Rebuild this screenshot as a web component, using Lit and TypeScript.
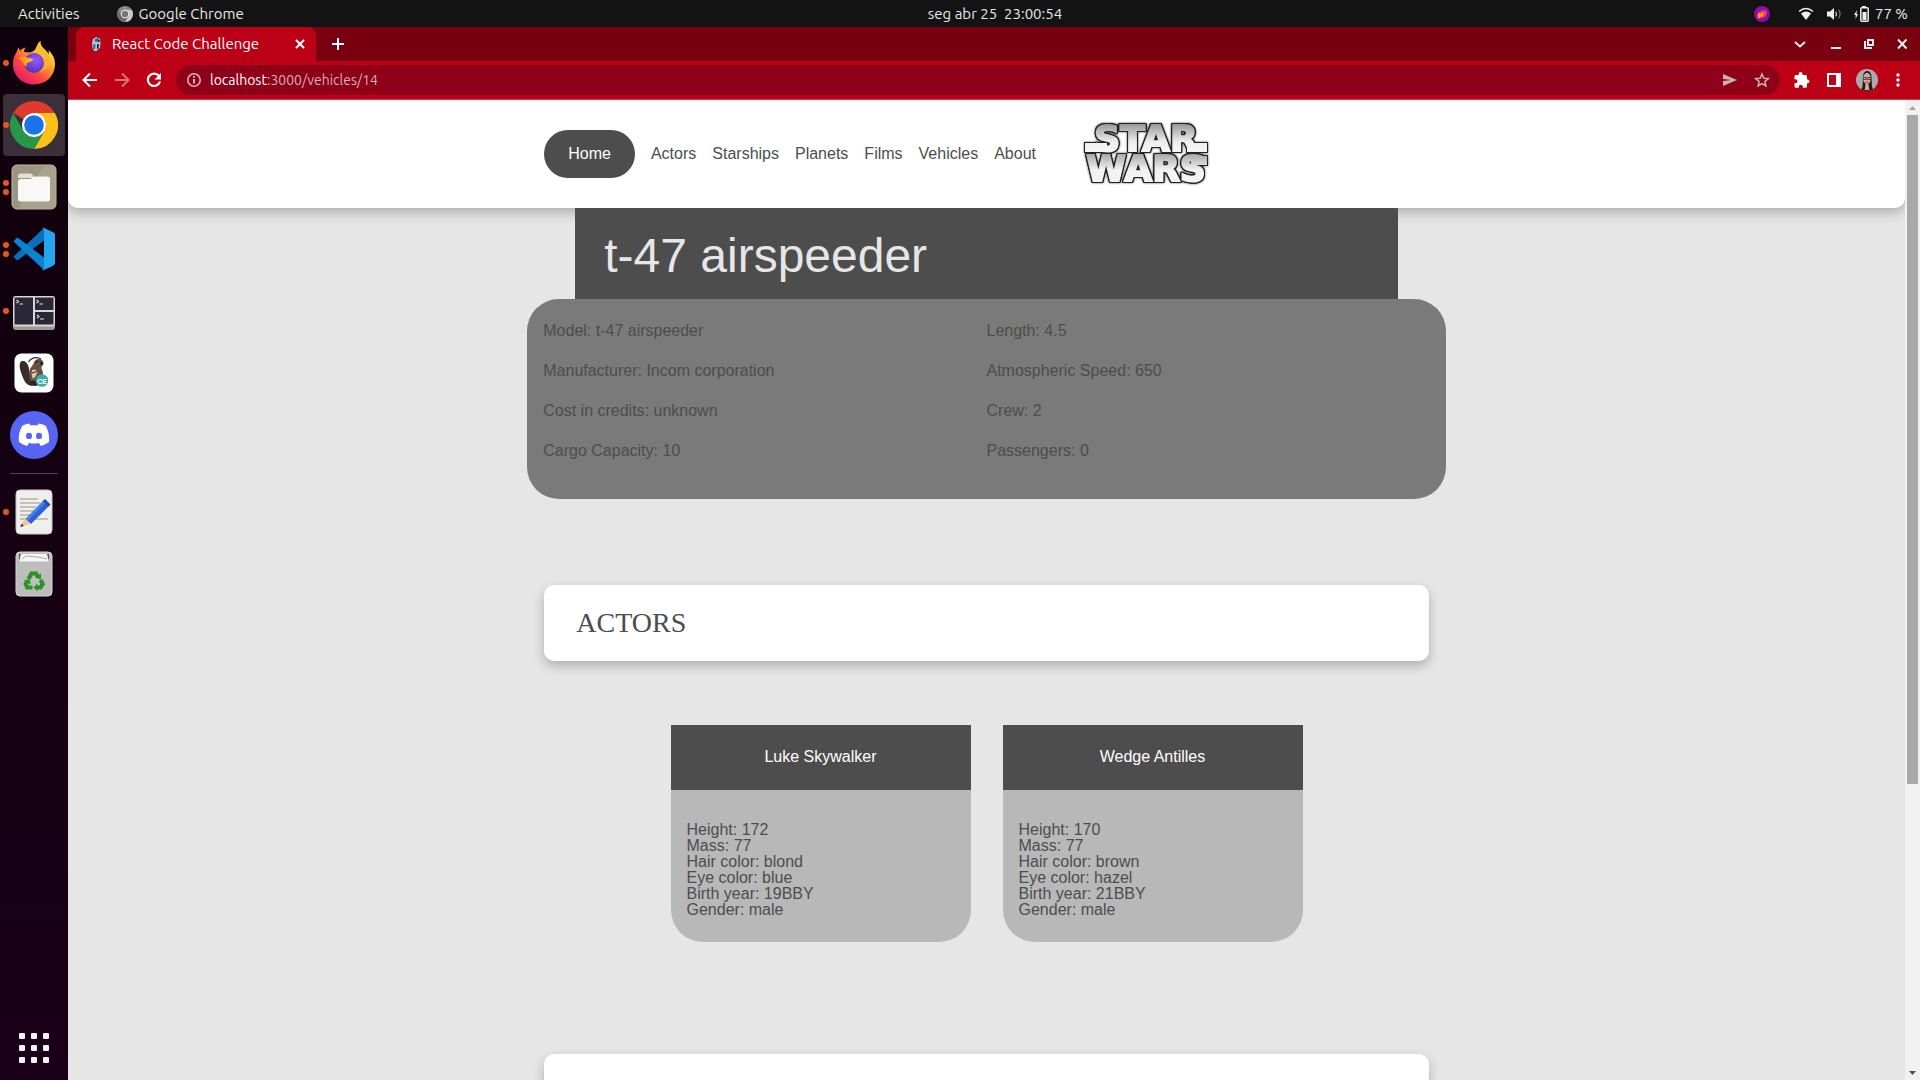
import { LitElement, html, css, svg } from "lit";
import { customElement, property } from "lit/decorators.js";

type Fact = [label: string, value: string];

interface Person {
  name: string;
  facts: Fact[];
}

const NAV = ["Actors", "Starships", "Planets", "Films", "Vehicles", "About"];

const VEHICLE: Fact[] = [
  ["Model", "t-47 airspeeder"],
  ["Length", "4.5"],
  ["Manufacturer", "Incom corporation"],
  ["Atmospheric Speed", "650"],
  ["Cost in credits", "unknown"],
  ["Crew", "2"],
  ["Cargo Capacity", "10"],
  ["Passengers", "0"],
];

const ACTORS: Person[] = [
  {
    name: "Luke Skywalker",
    facts: [
      ["Height", "172"],
      ["Mass", "77"],
      ["Hair color", "blond"],
      ["Eye color", "blue"],
      ["Birth year", "19BBY"],
      ["Gender", "male"],
    ],
  },
  {
    name: "Wedge Antilles",
    facts: [
      ["Height", "170"],
      ["Mass", "77"],
      ["Hair color", "brown"],
      ["Eye color", "hazel"],
      ["Birth year", "21BBY"],
      ["Gender", "male"],
    ],
  },
];

/* ---------- icons ---------- */

const firefoxIcon = html`<svg viewBox="0 0 48 48" width="48" height="48" aria-hidden="true">
  <defs>
    <linearGradient id="ff-a" x1="0.85" y1="0.1" x2="0.2" y2="0.95">
      <stop offset="0" stop-color="#fff44f" /><stop offset="0.35" stop-color="#ffa22e" />
      <stop offset="0.65" stop-color="#ff4a3f" /><stop offset="1" stop-color="#e5156f" />
    </linearGradient>
    <radialGradient id="ff-b" cx="0.6" cy="0.35" r="0.7">
      <stop offset="0" stop-color="#9059ff" /><stop offset="0.6" stop-color="#7140d8" /><stop offset="1" stop-color="#4a36a8" />
    </radialGradient>
    <linearGradient id="ff-c" x1="0" y1="0" x2="1" y2="0">
      <stop offset="0" stop-color="#ff8a1e" /><stop offset="1" stop-color="#ffc02e" />
    </linearGradient>
  </defs>
  <path fill="url(#ff-a)" d="M30.500 2c-.5 3 1 5.500 3.500 8 2 2 3.500 3.500 4.500 5.500.5-1.500.4-3-.2-4.500C43 15.500 45.300 20 45 26c-.5 11-9 19.500-21 19.500S3 36.500 3 25c0-5.500 2-10 4-12.500.2-1.500.8-3 2-4 .1 1.500.5 2.500 1.300 3.300C11.500 10 13.500 9 15.500 8.500c-1 1.500-1.500 3-1.300 4.500l5.800.5C23 12.500 25 11 26 9c1-2.500 2-5 4.500-7z" />
  <circle cx="24" cy="24" r="10" fill="url(#ff-b)" />
  <path fill="url(#ff-c)" d="M8.500 19c2-1.600 5-1.700 7.500-.7 2.500 1 5 .7 7.500 1.700-.5 2-3 3-5.500 3.700-1.500.5-2 2.300-1 4.300-3-1.500-4-4-5-6z" />
  <path fill="#ffb52e" opacity=".75" d="M26 9c4 1 8.500 5 9 11 .5 6-2 11-6.500 13 7-.5 12-6 11.500-14-.5-4-3-7-6-9.500-3-2-4-4-3.500-7.500-2.500 2-3.500 4.500-4.500 7z" />
</svg>`;

const chromeIcon = html`<svg viewBox="0 0 48 48" width="48" height="48" aria-hidden="true">
  <path fill="#df3a2e" d="M24 0A24 24 0 0 1 44.800 12H24a12 12 0 0 0-10.400 6L3.200 12A24 24 0 0 1 24 0z" />
  <path fill="#fbc116" d="M44.800 12A24 24 0 0 1 24 48l10.400-18A12 12 0 0 0 34.400 18L24 12z" />
  <path fill="#279847" d="M3.200 12A24 24 0 0 0 24 48l10.400-18a12 12 0 0 1-20.800 0z" />
  <circle cx="24" cy="24" r="12" fill="#fff" /><circle cx="24" cy="24" r="9.800" fill="#1a73e8" />
</svg>`;

const filesIcon = html`<svg viewBox="0 0 48 48" width="48" height="48" aria-hidden="true">
  <rect x="2" y="2" width="44" height="44" rx="5" fill="#9c9580" stroke="#c0baa6" />
  <path d="M34 2.500h8a4 4 0 0 1 4 4V42a4 4 0 0 1-4 4H8z" fill="#aea791" opacity=".7" />
  <path d="M8 13a2.500 2.500 0 0 1 2.500-2.500H19c2 0 3 .6 4 2l1.500 2.500H8z" fill="#e4dfd3" />
  <path d="M8 19c0-2 1-3 3-3h9c2 0 2.500-2.500 5-2.500h12.500A2.500 2.500 0 0 1 40 16v20a2.500 2.500 0 0 1-2.500 2.500h-27A2.500 2.500 0 0 1 8 36z" fill="#f9f8f6" />
</svg>`;

const codeIcon = html`<svg viewBox="0 0 48 48" width="48" height="48" aria-hidden="true">
  <path fill="#0a6fb8" d="M3.500 31.500 6 34.500c.8.800 1.800.8 2.600.2L34 15.500V3z" />
  <path fill="#0a84d0" d="M3.500 16.500 6 13.500c.8-.8 1.800-.8 2.600-.2L34 32.500V45z" />
  <path fill="#25a4f0" d="M34 3l9.500 4.600c1 .5 1.500 1.300 1.500 2.300v28.200c0 1-.5 1.800-1.500 2.300L34 45c-1 .4-1.800 0-2-.5 1 .3 2-.3 2-1.500V5c0-1.200-1-1.800-2-1.500.3-.6 1-.9 2-.5z" />
</svg>`;

const terminalIcon = html`<svg viewBox="0 0 48 48" width="48" height="48" aria-hidden="true">
  <rect x="3" y="9" width="42" height="34" rx="3" fill="#9d9b98" />
  <rect x="3" y="9" width="42" height="30.500" rx="3" fill="#d9d7d2" />
  <rect x="4.500" y="10.500" width="18.500" height="27" fill="#2a2838" />
  <rect x="25" y="10.500" width="18.500" height="12.500" fill="#2a2838" />
  <rect x="25" y="25" width="18.500" height="12.500" fill="#2a2838" />
  <g fill="none" stroke="#e8e8e8" stroke-width="1.100">
    <path d="M6.500 13l2 1.500-2 1.500M9.500 17H13" /><path d="M26.500 13l2 1.500-2 1.500M29.500 17H33" /><path d="M27 28l2 1.500-2 1.500M30 32h4" />
  </g>
</svg>`;

const beaverIcon = html`<svg viewBox="0 0 48 48" width="48" height="48" aria-hidden="true">
  <rect x="4.500" y="4.500" width="39" height="39" rx="7" fill="#fff" />
  <path fill="#382d29" d="M11 12.500c3-1.500 6 .5 7.500 5 1.200 4 .8 7 2 10.500 1 3.500 3 6 5 7.500-5 2.500-9.500.5-11.500-4.500-2.500-6-6.500-15-3-18.500z" />
  <path fill="#65503f" d="M20 20c1.500-2.500 3-4 4-6.500 1-2.600 3-4 5.500-3.500 3 .5 4.500 3 3.500 5.500-.5 1.500-2 2-1.500 4 2 3.500 2 8 0 12-1.500 3.500-4 5.500-8 5.500-4-5-5-11-3.500-17z" />
  <path fill="none" stroke="#2e2522" stroke-width="1.200" d="M18.500 13c2-4 8-6 12.500-3M25 13.500l3-1.500" />
  <path fill="#2e2522" d="M30 13l3.500.5-.5 2.500-3-.5zM20 33c2-2 4-1 6 0l2 3.500h-8z" />
  <path fill="#d8c4ab" d="M22 21c2.500-1.500 4.500 0 5.500 2-1 3-2 5-4.500 7-1.500-3-1.500-6-1-9z" />
  <path fill="none" stroke="#2e2522" d="M22 24l5-1.500" />
  <circle cx="32" cy="31.500" r="6.300" fill="#3fa9b0" />
  <text x="32" y="34.500" text-anchor="middle" font-family="Liberation Sans, sans-serif" font-weight="700" font-size="7" fill="#fff">CE</text>
</svg>`;

const discordIcon = html`<svg viewBox="0 0 48 48" width="48" height="48" aria-hidden="true">
  <circle cx="24" cy="24" r="24" fill="#5865f2" />
  <path fill="#fff" fill-rule="evenodd" d="M19.500 12.500c-2.600.4-5 1.200-7.200 2.200C9 19.800 8.300 25.500 9 31c2.700 2 5.400 3.300 8.200 4l1.800-3c3.300.8 6.700.8 10 0l1.800 3c2.800-.7 5.500-2 8.200-4 .8-6-.7-11.500-3.300-16.300-2.200-1-4.600-1.800-7.200-2.200l-1 2c-2.300-.3-4.700-.3-7 0zM19 21.700a3 3.200 0 1 1 0 6.400 3 3.200 0 0 1 0-6.400zm10 0a3 3.200 0 1 1 0 6.400 3 3.200 0 0 1 0-6.400z" />
</svg>`;

const editorIcon = html`<svg viewBox="0 0 48 48" width="48" height="48" aria-hidden="true">
  <rect x="6" y="2" width="36" height="44" rx="4" fill="#efefee" stroke="#c9c9c7" />
  <path stroke="#c6c1b6" stroke-width="2" d="M10 11h18M10 15h20M10 19h16M10 23h14M10 27h11M10 31h28" />
  <path fill="#2d62d6" d="M15.500 31 34 12l5.500 5.500L21 36z" /><path fill="#4b82ec" d="M15.500 31 34 12l2 2-18.500 19z" />
  <path fill="#1c4bb4" d="M33 13l2-2 5.500 5.500-2 2z" />
  <path fill="#f7c48b" d="M15 30.500 10 38.800 20.500 36z" /><path fill="#333" d="M12 35.500 10 39l3.700-1z" />
</svg>`;

const trashIcon = html`<svg viewBox="0 0 48 48" width="48" height="48" aria-hidden="true">
  <rect x="6" y="2" width="36" height="44" rx="4" fill="#bdbdbc" stroke="#d7d7d6" />
  <path fill="#555" d="M9 4h30v7H9z" /><path fill="#f5f5f5" d="M11 4h26l2 7.500H9z" /><path stroke="#aaa" fill="none" d="M12 9l4-3 12 1 9 2" />
  <g fill="none" stroke="#2a9328" stroke-width="4.200">
    <path d="M18.500 29l3-5.500h4.500l2 3.500" /><path d="M30.500 30l2.200 4-2.200 3.500H26" /><path d="M22.500 37.500h-5.200L15.700 34l2-3.500" />
  </g>
  <g fill="#2a9328"><path d="M31 23.500v6l-6-2z" /><path d="M27.500 33.500v8l-4-4z" /><path d="M14 30.500l5.500-1.500 1.200 5.500z" /></g>
</svg>`;

const appsIcon = html`<svg viewBox="0 0 30 30" width="30" height="30" fill="#f2f2f2" aria-hidden="true">
  ${[0, 12, 24].map((y) => [0, 12, 24].map((x) => svg`<rect x=${x} y=${y} width="6" height="6" rx="1" />`))}
</svg>`;

const faviconIcon = html`<svg viewBox="0 0 16 16" width="16" height="16" aria-hidden="true">
  <path fill="#a9c6d6" d="M5 3l3-2 4 1.500.5 5L12 12l-2 1-1 2H6l-1.500-3L4 7z" />
  <path fill="#35627f" d="M7 3l3-1 1.500 2-1 2L7 5.500zM5.500 8l2 .5-.5 4-2 1z" /><path fill="#16242d" d="M9 8.500l2-.5-.5 4-1.500 1zM10 4h1.500v2H10z" />
</svg>`;

const wordmark = html`<svg class="wordmark" viewBox="0 0 128 64" width="128" height="64" role="img" aria-label="Star Wars">
  <defs>
    <linearGradient id="steel" x1="0" y1="0" x2="0" y2="64" gradientUnits="userSpaceOnUse">
      <stop offset="0.04" stop-color="#9b9b9b" /><stop offset="0.3" stop-color="#ececec" />
      <stop offset="0.46" stop-color="#f6f6f6" /><stop offset="0.5" stop-color="#a8a8a8" /><stop offset="0.75" stop-color="#f3f3f3" />
    </linearGradient>
  </defs>
  <g class="steel" fill="url(#steel)" stroke="url(#steel)" stroke-width="2">
    <rect x="4" y="22" width="20" height="7" /><rect x="106" y="22" width="18" height="7" /><rect x="110" y="35" width="14" height="7" />
    <text text-anchor="middle"><tspan x="64" y="29">STAR</tspan><tspan x="64" y="59">WARS</tspan></text>
  </g>
</svg>`;

/* ---------- desktop bars ---------- */

@customElement("system-bar")
class SystemBar extends LitElement {
  static styles = css`
    :host {
      display: grid;
      grid-template-columns: 1fr auto 1fr;
      align-items: center;
      height: 27px;
      padding: 0 12px 0 18px;
      background: #131313;
      color: #e8e8e8;
      font: 15px/27px Ubuntu, "Noto Sans", sans-serif;
    }
    .group { display: flex; align-items: center; }
    .end { justify-content: flex-end; }
    .app { display: flex; align-items: center; gap: 6px; margin-left: 37px; }
    .clock { margin-left: 64px; white-space: pre; }
    .flame { margin-right: 28px; }
    .wifi { margin-right: 12px; }
    .volume { margin-right: 12px; }
    .battery { margin-right: 6px; }
    svg { display: block; }
  `;

  render() {
    return html`
      <div class="group">
        <span>Activities</span>
        <span class="app">
          <svg viewBox="0 0 16 16" width="16" height="16" aria-hidden="true">
            <circle cx="8" cy="8" r="8" fill="#8a8a8a" /><path fill="#c8c8c8" d="M14.900 4A8 8 0 0 1 8 16l3.500-6A4 4 0 0 0 11.500 6L8 4z" />
            <path fill="#6b6b6b" d="M1.100 4A8 8 0 0 0 8 16l3.500-6a4 4 0 0 1-7 0z" />
            <circle cx="8" cy="8" r="4.200" fill="#eee" /><circle cx="8" cy="8" r="3.200" fill="#777" />
          </svg>
          Google Chrome
        </span>
      </div>
      <time class="clock">seg abr 25  23:00:54</time>
      <div class="group end">
        <svg class="flame" viewBox="0 0 16 16" width="16" height="16" aria-hidden="true">
          <circle cx="8" cy="8" r="8" fill="#8a0fa8" />
          <path fill="#ff3d5e" d="M4 13C2.500 9 4 7 5 5l1 2 2-4 .5 3L11 3v3l2-2c0 4-1 8-6 8z" /><path fill="#ffb800" d="M4 12c0-3 .5-4 1-5l1.500 1.500L8.500 5l-.3 3.500L10 7c0 2-2 3.500-6 5z" />
        </svg>
        <svg class="wifi" viewBox="0 0 16 14" width="16" height="14" aria-hidden="true">
          <path fill="none" stroke="#eee" stroke-width="1.500" d="M1 4.500Q8-1.500 15 4.500" /><path fill="#eee" d="M3 6.500Q8 2.500 13 6.500L8 13z" />
        </svg>
        <svg class="volume" viewBox="0 0 16 14" width="16" height="14" aria-hidden="true">
          <path fill="#eee" d="M1 4.500h3L8 1v12L4 9.500H1z" /><path fill="none" stroke="#ccc" stroke-width="1.200" d="M9.500 4.500q2 2.500 0 5" />
          <path fill="none" stroke="#777" stroke-width="1.200" d="M12.500 2.500q3 4.500 0 9" />
        </svg>
        <svg class="battery" viewBox="0 0 15 16" width="15" height="16" aria-hidden="true">
          <path fill="#eee" d="M3 4L0 9h1.800L1.500 13 4 8H2.500z" /><path fill="#eee" d="M8 0h4v2H8z" />
          <rect x="6.800" y="1.800" width="7.400" height="13.400" rx="1" fill="none" stroke="#eee" stroke-width="1.500" /><path fill="#eee" d="M8.500 6h4v8h-4z" />
        </svg>
        <span>77 %</span>
      </div>
    `;
  }
}

@customElement("app-dock")
class AppDock extends LitElement {
  static styles = css`
    :host {
      display: flex;
      flex-direction: column;
      align-items: center;
      padding: 5px 0 17px;
      box-sizing: border-box;
      background: linear-gradient(#10020c, #1a0018);
    }
    .tile {
      display: grid;
      grid-template-columns: 1fr 48px 1fr;
      align-items: center;
      width: 68px;
      height: 62px;
      padding: 0;
      border: 0;
      background: none;
    }
    .tile svg { display: block; }
    .active { width: 62px; border-radius: 4px; background: #3b303a; }
    .active .dots { margin-left: 0; }
    .dots { display: flex; flex-direction: column; gap: 3px; margin-left: 3px; }
    .dot { width: 6px; height: 6px; border-radius: 50%; background: #e95420; }
    .rule { width: 48px; height: 1px; margin: 7px 0; background: #4f4450; }
    .apps { margin-top: auto; padding: 0; border: 0; background: none; }
    .apps svg { display: block; }
  `;

  private tile(name: string, icon: unknown, windows = 0, active = false) {
    return html`<button class="tile ${active ? "active" : ""}" aria-label=${name}>
      <span class="dots">${Array.from({ length: windows }, () => html`<span class="dot"></span>`)}</span>
      ${icon}
    </button>`;
  }

  render() {
    return html`
      ${this.tile("Firefox", firefoxIcon, 1)}
      ${this.tile("Google Chrome", chromeIcon, 1, true)}
      ${this.tile("Files", filesIcon, 2)}
      ${this.tile("Visual Studio Code", codeIcon, 2)}
      ${this.tile("Terminal", terminalIcon, 1)}
      ${this.tile("DBeaver", beaverIcon)}
      ${this.tile("Discord", discordIcon)}
      <div class="rule"></div>
      ${this.tile("Text Editor", editorIcon, 1)}
      ${this.tile("Trash", trashIcon)}
      <button class="apps" aria-label="Show applications">${appsIcon}</button>
    `;
  }
}

@customElement("browser-bar")
class BrowserBar extends LitElement {
  static styles = css`
    :host { display: block; font: 15px/20px Ubuntu, "Noto Sans", sans-serif; color: #fff; }
    button { display: grid; place-items: center; padding: 0; border: 0; background: none; color: inherit; font: inherit; }
    svg { display: block; }
    .tabs { display: flex; align-items: stretch; height: 34px; padding: 0 10px 0 8px; background: #79000e; }
    .tab {
      display: flex;
      align-items: center;
      box-sizing: border-box;
      width: 240px;
      padding: 0 9px 0 12px;
      border-radius: 8px 8px 0 0;
      background: #bc0016;
    }
    .title { flex: 1; margin-left: 8px; }
    .favicon { display: block; }
    .add { width: 44px; }
    .controls { display: flex; align-items: center; gap: 16px; margin-left: auto; }
    .tools {
      display: flex;
      align-items: center;
      box-sizing: border-box;
      height: 39px;
      padding: 0 12px;
      background: #bc0016;
      border-bottom: 1px solid #cf3a4b;
    }
    .tools > button { width: 20px; margin-right: 12px; }
    .tools > .dim { color: #dd7580; }
    .address {
      flex: 1;
      display: flex;
      align-items: center;
      height: 30px;
      margin-right: 12px;
      padding: 0 8px 0 10px;
      border-radius: 15px;
      background: #8f0019;
      color: #d3b0b5;
      font-size: 14px;
    }
    .url { flex: 1; margin-left: 8px; }
    .host { color: #fff; }
    .marks { display: flex; gap: 12px; color: #ccb0b4; }
    .tools > .last { margin-right: 0; }
    .face { border-radius: 50%; }
  `;

  render() {
    return html`
      <div class="tabs">
        <div class="tab">
          <span class="favicon">${faviconIcon}</span>
          <span class="title">React Code Challenge</span>
          <button aria-label="Close tab">
            <svg viewBox="0 0 14 14" width="14" height="14" stroke="currentColor" stroke-width="2"><path d="M3 3l8 8M11 3l-8 8" /></svg>
          </button>
        </div>
        <button class="add" aria-label="New tab">
          <svg viewBox="0 0 14 14" width="14" height="14" stroke="currentColor" stroke-width="2"><path d="M7 1v12M1 7h12" /></svg>
        </button>
        <div class="controls">
          <button aria-label="Search tabs">
            <svg viewBox="0 0 20 20" width="20" height="20" fill="none" stroke="#eee" stroke-width="2"><path d="M5 8l5 4.500L15 8" /></svg>
          </button>
          <button aria-label="Minimize">
            <svg viewBox="0 0 20 20" width="20" height="20" fill="#eee"><path d="M5 13h10v2H5z" /></svg>
          </button>
          <button aria-label="Restore">
            <svg viewBox="0 0 16 20" width="16" height="20" fill="none" stroke="#eee" stroke-width="2"><path d="M6 6h5v5H6zM3 7v7h7" /></svg>
          </button>
          <button aria-label="Close window">
            <svg viewBox="0 0 16 20" width="16" height="20" stroke="#eee" stroke-width="2"><path d="M4 5.500l8.500 9M12.500 5.500l-8.500 9" /></svg>
          </button>
        </div>
      </div>
      <div class="tools">
        <button aria-label="Back">
          <svg viewBox="0 0 20 20" width="20" height="20" fill="none" stroke="currentColor" stroke-width="2"><path d="M17 10H4M10 3.500L3.500 10l6.500 6.500" /></svg>
        </button>
        <button class="dim" aria-label="Forward">
          <svg viewBox="0 0 20 20" width="20" height="20" fill="none" stroke="currentColor" stroke-width="2"><path d="M3 10h13M10 3.500l6.500 6.500-6.500 6.500" /></svg>
        </button>
        <button aria-label="Reload">
          <svg viewBox="0 0 20 20" width="20" height="20" fill="none" stroke="currentColor" stroke-width="2.200"><path d="M15 6a6.200 6.200 0 1 0 1 5.500" /><path d="M17 3v6.500h-6.500z" fill="currentColor" stroke="none" /></svg>
        </button>
        <div class="address">
          <svg viewBox="0 0 16 16" width="16" height="16" fill="none" stroke="currentColor" stroke-width="1.600"><circle cx="8" cy="8" r="6.200" /><path stroke-width="2" d="M8 7v4.500M8 4v1.800" /></svg>
          <span class="url"><span class="host">localhost</span>:3000/vehicles/14</span>
          <span class="marks">
            <button aria-label="Share">
              <svg viewBox="0 0 20 20" width="20" height="20" fill="currentColor"><path d="M3 4l14 6-14 6v-5l8-1-8-1z" /></svg>
            </button>
            <button aria-label="Bookmark">
              <svg viewBox="0 0 20 20" width="20" height="20" fill="none" stroke="currentColor" stroke-width="1.500"><path d="M10 4l1.800 4.200 4.500.4-3.400 3 1 4.400L10 13.600 6.100 16l1-4.400-3.400-3 4.500-.4z" /></svg>
            </button>
          </span>
        </div>
        <button aria-label="Extensions">
          <svg viewBox="0 0 20 20" width="20" height="20" fill="currentColor"><path d="M16 9.500h-1V6.500A1.500 1.500 0 0 0 13.500 5h-3V4a1.900 1.900 0 0 0-3.800 0v1h-3A1.500 1.500 0 0 0 2.500 6.500v2.800h1a2 2 0 0 1 0 4h-1v2.900a1.500 1.500 0 0 0 1.500 1.500h2.800v-1a2 2 0 0 1 4 0v1h2.700a1.500 1.500 0 0 0 1.500-1.500v-3h1a1.900 1.900 0 0 0 0-3.700z" /></svg>
        </button>
        <button aria-label="Side panel">
          <svg viewBox="0 0 20 20" width="20" height="20" fill="currentColor" fill-rule="evenodd"><path d="M3 3h14v14H3zM5 5v10h7V5z" /></svg>
        </button>
        <button aria-label="Profile">
          <svg class="face" viewBox="0 0 22 22" width="22" height="22">
            <path fill="#a9aaac" d="M0 0h22v22H0z" /><path fill="#211c1f" d="M7 8c0-8 8.500-8 8.500 0l.5 10 2 4H4l2.500-4z" /><ellipse cx="11" cy="9.500" rx="3.800" ry="5.800" fill="#d6a796" />
            <path stroke="#33282b" stroke-width=".8" fill="none" d="M7.500 8.500h2.800v2H7.500zM11.700 8.500h2.800v2h-2.800z" /><path fill="#b33348" d="M9.500 12.800h3v1h-3z" /><path fill="#d9a595" d="M9.500 15h3l.8 6H8.700z" />
          </svg>
        </button>
        <button class="last" aria-label="Menu">
          <svg viewBox="0 0 20 20" width="20" height="20" fill="currentColor"><circle cx="10" cy="5" r="1.700" /><circle cx="10" cy="10" r="1.700" /><circle cx="10" cy="15" r="1.700" /></svg>
        </button>
      </div>
    `;
  }
}

/* ---------- web page ---------- */

@customElement("site-header")
class SiteHeader extends LitElement {
  static styles = css`
    :host {
      display: flex;
      justify-content: center;
      height: 108px;
      background: #fff;
      border-radius: 0 0 10px 10px;
      box-shadow: 0 5px 12px rgba(0, 0, 0, 0.24);
    }
    .inner { display: flex; align-items: center; box-sizing: border-box; width: 50%; padding: 0 17px; }
    nav { display: flex; align-items: center; gap: 16px; margin-right: 46px; }
    a { color: #4d4d4d; text-decoration: none; }
    .home { padding: 0 24px; border-radius: 24px; background: #4d4d4d; color: #fff; line-height: 48px; }
    .wordmark { display: block; overflow: visible; }
    .steel {
      font: 700 36px "DejaVu Sans", sans-serif;
      filter: drop-shadow(1px 0 #222) drop-shadow(-1px 0 #222) drop-shadow(0 1px #222) drop-shadow(0 -1px #222) drop-shadow(0 0 1px #555);
    }
  `;

  render() {
    return html`<div class="inner">
      <nav>
        <a class="home" href="#home">Home</a>
        ${NAV.map((name) => html`<a href="#${name.toLowerCase()}">${name}</a>`)}
      </nav>
      ${wordmark}
    </div>`;
  }
}

@customElement("person-card")
class PersonCard extends LitElement {
  @property({ attribute: false }) person!: Person;

  static styles = css`
    :host { display: block; width: 300px; border-radius: 0 0 32px 32px; overflow: hidden; background: #b8b8b8; }
    h3 { margin: 0; padding-bottom: 1px; background: #4d4d4d; color: #fff; font-weight: 400; font-size: 16px; line-height: 64px; text-align: center; }
    ul { margin: 0; padding: 32px 16px 24px; list-style: none; line-height: 16px; }
  `;

  render() {
    return html`
      <h3>${this.person.name}</h3>
      <ul>${this.person.facts.map(([label, value]) => html`<li>${label}: ${value}</li>`)}</ul>
    `;
  }
}

@customElement("app-root")
class AppRoot extends LitElement {
  static styles = css`
    :host {
      display: grid;
      grid-template: auto 1fr / 68px 1fr;
      height: 100vh;
      overflow: hidden;
      background: #e6e6e6;
    }
    system-bar { grid-column: 1 / -1; }
    .window { display: flex; flex-direction: column; min-height: 0; }
    .viewport { flex: 1; display: flex; min-height: 0; }
    .page { flex: 1; overflow: hidden; color: #4d4d4d; font: 16px/20px "Liberation Sans", Arial, sans-serif; }
    main { width: 50%; margin: 0 auto; }
    h1 {
      position: relative;
      margin: 0 48px;
      padding: 4px 29px 0;
      background: #4d4d4d;
      color: #e6e6e6;
      font-weight: 400;
      font-size: 48px;
      line-height: 87px;
    }
    .specs {
      display: grid;
      grid-template-columns: 1fr 1fr;
      grid-auto-rows: 40px;
      margin: 0;
      padding: 12px 16px 28px;
      list-style: none;
      line-height: 40px;
      border-radius: 32px;
      background: #7a7a7a;
    }
    h2 {
      margin: 86px 17px 64px;
      padding: 0 32px;
      border-radius: 10px;
      background: #fff;
      box-shadow: 0 5px 12px rgba(0, 0, 0, 0.24);
      font: 28px/76px "Liberation Serif", "Times New Roman", serif;
      text-transform: uppercase;
    }
    .cards { display: flex; justify-content: center; gap: 32px; }
    .cards + h2 { margin-top: 112px; min-height: 76px; }
    .scroll { display: flex; flex-direction: column; align-items: center; width: 15px; background: #f1f1f1; }
    .scroll svg { display: block; }
    .thumb { flex: 669; width: 11px; background: #a8a8a8; }
    .rest { flex: 281; }
  `;

  render() {
    return html`
      <system-bar></system-bar>
      <app-dock></app-dock>
      <div class="window">
        <browser-bar></browser-bar>
        <div class="viewport">
          <div class="page">
            <site-header></site-header>
            <main>
              <h1>t-47 airspeeder</h1>
              <ul class="specs">${VEHICLE.map(([label, value]) => html`<li>${label}: ${value}</li>`)}</ul>
              <h2>Actors</h2>
              <div class="cards">${ACTORS.map((person) => html`<person-card .person=${person}></person-card>`)}</div>
              <h2></h2>
            </main>
          </div>
          <div class="scroll" aria-hidden="true">
            <svg viewBox="0 0 15 15" width="15" height="15" fill="#a3a3a3"><path d="M4 10l3.500-4L11 10z" /></svg>
            <div class="thumb"></div>
            <div class="rest"></div>
            <svg viewBox="0 0 15 15" width="15" height="15" fill="#505050"><path d="M4 6l3.500 4L11 6z" /></svg>
          </div>
        </div>
      </div>
    `;
  }
}
